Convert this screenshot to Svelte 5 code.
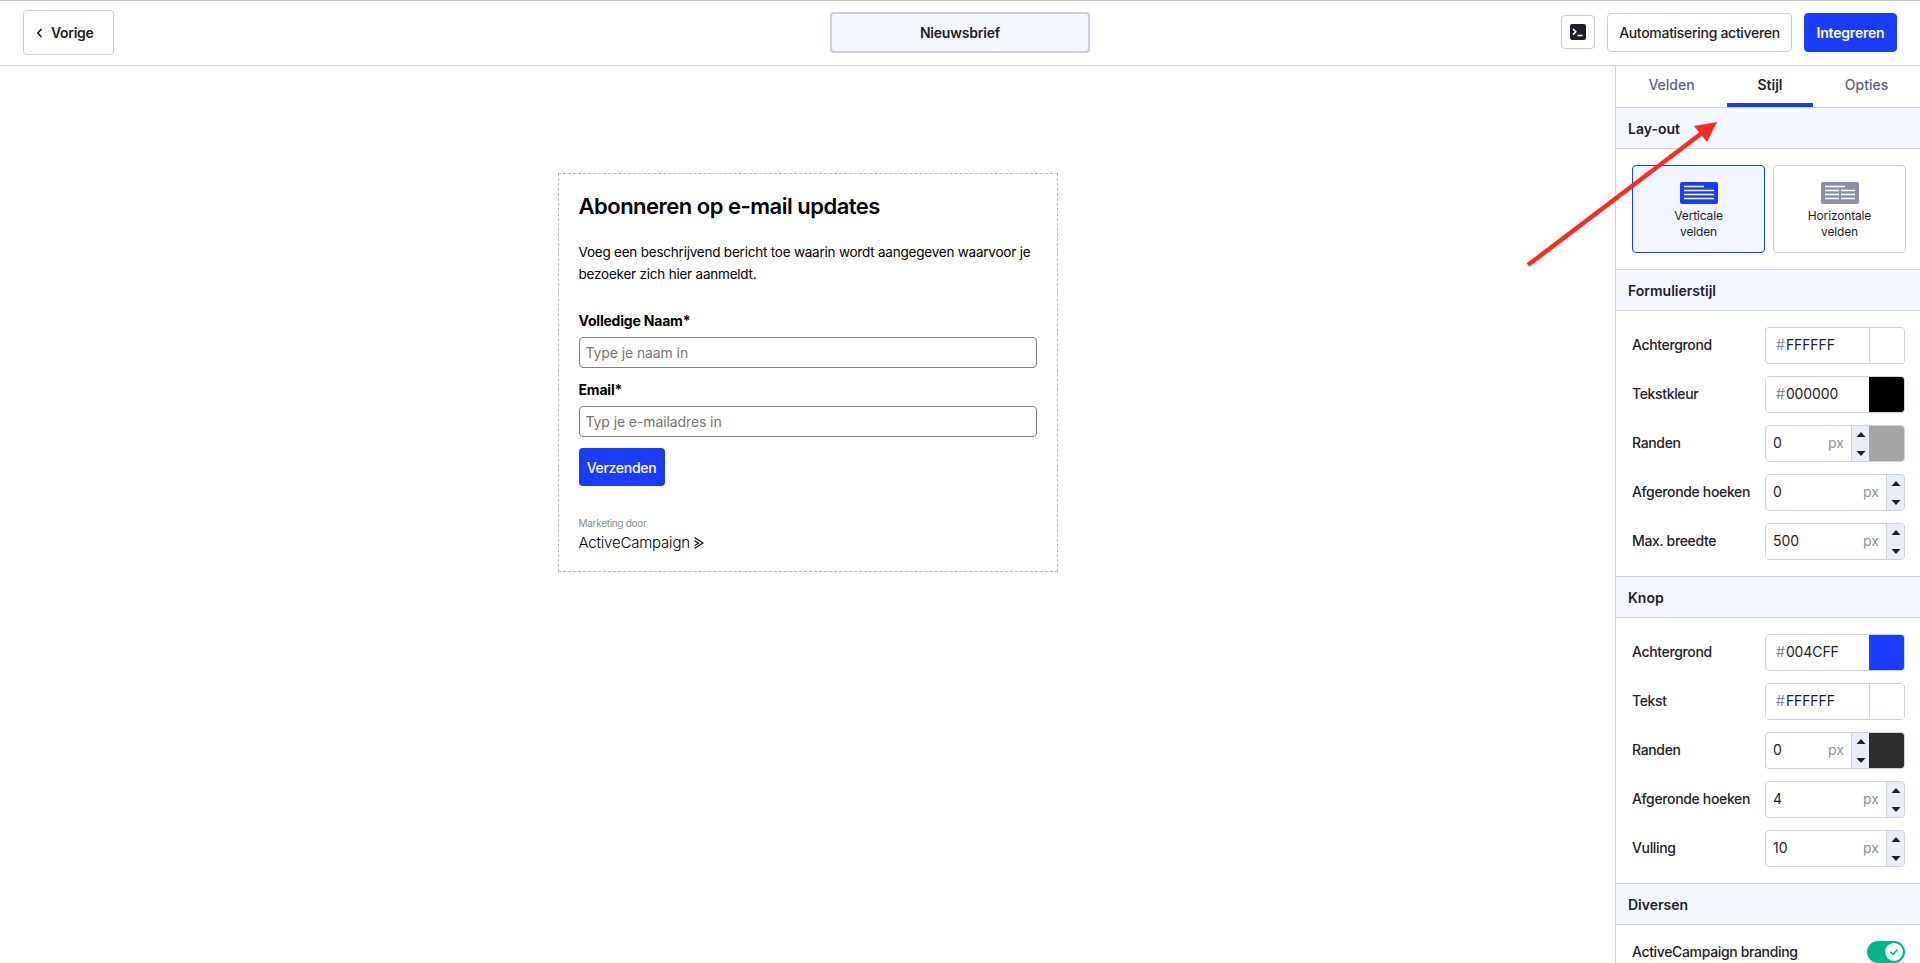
<script lang="ts">
  type Row = { label: string; hex?: string; num?: string; swatch?: string };

  const formRows: Row[] = [
    { label: 'Achtergrond', hex: 'FFFFFF', swatch: '#ffffff' },
    { label: 'Tekstkleur', hex: '000000', swatch: '#000000' },
    { label: 'Randen', num: '0', swatch: '#a5a5a5' },
    { label: 'Afgeronde hoeken', num: '0' },
    { label: 'Max. breedte', num: '500' }
  ];

  const buttonRows: Row[] = [
    { label: 'Achtergrond', hex: '004CFF', swatch: '#1a3cff' },
    { label: 'Tekst', hex: 'FFFFFF', swatch: '#ffffff' },
    { label: 'Randen', num: '0', swatch: '#2d2d2d' },
    { label: 'Afgeronde hoeken', num: '4' },
    { label: 'Vulling', num: '10' }
  ];
</script>

{#snippet spinner()}
  <span class="spin">
    <svg width="10" height="28" viewBox="0 0 10 28"><path d="M0.5 7 5 2l4.500 5z M0.500 21 5 26l4.500-5z" fill="#1f2129" /></svg>
  </span>
{/snippet}

{#snippet fieldRows(rows: Row[])}
  <div class="rows">
    {#each rows as row}
      <div class="row">
        <span class="row-label">{row.label}</span>
        <div class="field">
          {#if row.hex}
            <span class="hash">#</span><span class="hex">{row.hex}</span>
          {:else}
            <span class="num">{row.num}</span>
            <span class="px">px</span>
            {@render spinner()}
          {/if}
          {#if row.swatch}
            <span class="swatch" class:light={row.swatch === '#ffffff'} style="background: {row.swatch}"></span>
          {/if}
        </div>
      </div>
    {/each}
  </div>
{/snippet}

<div class="page">
  <header class="topbar">
    <div class="side left">
      <button class="btn back">
        <svg width="7" height="10" viewBox="0 0 7 10"><path d="M5.500 1 1.800 5l3.700 4" fill="none" stroke="#1f2129" stroke-width="1.700" /></svg>
        <span>Vorige</span>
      </button>
    </div>
    <div class="title-box">Nieuwsbrief</div>
    <div class="side right">
      <button class="btn term" aria-label="Code">
        <svg width="16" height="16" viewBox="0 0 16 16">
          <rect width="16" height="16" rx="2" fill="#1f2129" />
          <path d="M3 5 5.800 7.800 3 10.600" fill="none" stroke="#fff" stroke-width="1.600" />
          <path d="M7.500 11.500h5" stroke="#fff" stroke-width="1.500" />
        </svg>
      </button>
      <button class="btn auto">Automatisering activeren</button>
      <button class="btn primary">Integreren</button>
    </div>
  </header>

  <div class="main">
    <main class="canvas">
      <form class="signup">
        <h1>Abonneren op e-mail updates</h1>
        <p>Voeg een beschrijvend bericht toe waarin wordt aangegeven waarvoor je bezoeker zich hier aanmeldt.</p>
        <label class="form-label" for="naam">Volledige Naam*</label>
        <input id="naam" type="text" placeholder="Type je naam in" />
        <label class="form-label second" for="mail">Email*</label>
        <input id="mail" type="text" placeholder="Typ je e-mailadres in" />
        <button class="send" type="button">Verzenden</button>
        <div class="powered">Marketing door</div>
        <div class="brand">
          <span>ActiveCampaign</span>
          <svg width="11" height="14" viewBox="0 0 11 14"><path d="M1.500 1.500 9.800 7 1.500 12.500M1.500 4.500 5.500 7.200 1.500 9.800" fill="none" stroke="#111" stroke-width="1.300" /></svg>
        </div>
      </form>
    </main>

    <aside class="panel">
      <nav class="tabs">
        <span class="tab">Velden</span>
        <span class="tab active">Stijl</span>
        <span class="tab">Opties</span>
      </nav>

      <h2 class="section">Lay-out</h2>
      <div class="cards">
        <div class="card selected">
          <svg width="38" height="22" viewBox="0 0 38 22">
            <rect width="38" height="22" rx="2" fill="#1a3cff" />
            <path d="M4 4.500h20M4 8.500h30M4 12.500h30M4 16.500h30" stroke="#fff" stroke-width="1.500" />
          </svg>
          <span>Verticale<br />velden</span>
        </div>
        <div class="card">
          <svg width="38" height="22" viewBox="0 0 38 22">
            <rect width="38" height="22" rx="2" fill="#8a90a6" />
            <path d="M4 4.500h20M4 8.500h14M20 8.500h14M4 12.500h14M20 12.500h14M4 16.500h14M20 16.500h14" stroke="#fff" stroke-width="1.500" />
          </svg>
          <span>Horizontale<br />velden</span>
        </div>
      </div>

      <h2 class="section">Formulierstijl</h2>
      {@render fieldRows(formRows)}

      <h2 class="section">Knop</h2>
      {@render fieldRows(buttonRows)}

      <h2 class="section">Diversen</h2>
      <div class="branding">
        <span class="row-label">ActiveCampaign branding</span>
        <span class="toggle">
          <span class="knob">
            <svg width="10" height="8" viewBox="0 0 10 8"><path d="M1.500 4 4 6.300 8.500 1.500" fill="none" stroke="#00b78a" stroke-width="1.700" /></svg>
          </span>
        </span>
      </div>
    </aside>
  </div>

  <!-- annotation drawn over the screenshot -->
  <svg class="arrow" width="1920" height="963" viewBox="0 0 1920 963">
    <path d="M1528 265 1702 133" stroke="#ff2a22" stroke-width="4.500" fill="none" />
    <path d="M1717 122 1694 126 1707 142z" fill="#ff2a22" />
  </svg>
</div>

<style>
  :global(body) {
    margin: 0;
    background: #fff;
    overflow: hidden;
  }

  .page {
    position: relative;
    height: 963px;
    overflow: hidden;
    font-family: Inter, "Noto Sans", sans-serif;
    color: #1f2129;
    border-top: 1px solid #c9c9c9;
    box-sizing: border-box;
  }

  .topbar {
    height: 65px;
    box-sizing: border-box;
    display: flex;
    align-items: center;
    justify-content: space-between;
    padding: 0 23px;
    border-bottom: 1px solid #ccd0dc;
    position: relative;
  }

  .side {
    display: flex;
    align-items: center;
    width: 400px;
  }

  .side.right {
    justify-content: flex-end;
    gap: 12px;
    margin-top: -2px;
  }

  .btn {
    font: inherit;
    font-size: 14px;
    font-weight: 500;
    color: #1f2129;
    background: #fff;
    border: 1px solid #c9cfe0;
    border-radius: 4px;
    box-sizing: border-box;
    padding: 0;
    display: flex;
    align-items: center;
    justify-content: center;
  }

  .back {
    width: 91px;
    height: 45px;
    margin-top: -1px;
    justify-content: flex-start;
    padding-left: 12px;
    gap: 8px;
    font-weight: 600;
    letter-spacing: -0.3px;
  }

  .title-box {
    width: 260px;
    height: 41px;
    box-sizing: border-box;
    margin-top: -2px;
    border: 2px solid #c9cfe0;
    border-radius: 4px;
    background: #f5f8ff;
    font-size: 14px;
    font-weight: 600;
    letter-spacing: -0.2px;
    display: flex;
    align-items: center;
    justify-content: center;
  }

  .term {
    width: 34px;
    height: 34px;
  }

  .auto {
    width: 185px;
    height: 39px;
    letter-spacing: -0.3px;
  }

  .primary {
    width: 93px;
    height: 39px;
    background: #1a3cff;
    border-color: #1a3cff;
    color: #fff;
    font-weight: 600;
    letter-spacing: -0.2px;
  }

  .main {
    display: flex;
    height: 897px;
  }

  .canvas {
    flex: 1;
    display: flex;
    justify-content: center;
    align-items: flex-start;
    padding-top: 107px;
  }

  .signup {
    width: 500px;
    box-sizing: border-box;
    border: 1px dashed #b9b9b9;
    padding: 20px 20px 18px;
    color: #000;
    display: flex;
    flex-direction: column;
    align-items: flex-start;
  }

  h1 {
    margin: 0;
    font-size: 22px;
    line-height: 25px;
    font-weight: 600;
    letter-spacing: -0.5px;
  }

  p {
    margin: 22px 0 0;
    font-size: 13.500px;
    line-height: 22px;
    letter-spacing: -0.22px;
  }

  .form-label {
    margin-top: 25px;
    font-size: 14px;
    line-height: 22px;
    font-weight: 700;
    letter-spacing: -0.2px;
  }

  .form-label.second {
    margin-top: 11px;
  }

  input {
    width: 458px;
    height: 31px;
    box-sizing: border-box;
    margin-top: 5px;
    border: 1px solid #808080;
    border-radius: 4px;
    padding: 0 6px;
    font: inherit;
    font-size: 14px;
    letter-spacing: -0.1px;
    outline: none;
  }

  input::placeholder {
    color: #757575;
  }

  .send {
    margin-top: 11px;
    width: 86px;
    height: 38px;
    border: 0;
    border-radius: 4px;
    background: #1a3cff;
    color: #fff;
    font: inherit;
    font-size: 14px;
    font-weight: 500;
    letter-spacing: -0.3px;
    padding: 0;
  }

  .powered {
    margin-top: 30px;
    font-size: 10px;
    line-height: 14px;
    color: #8c8c8c;
    letter-spacing: -0.3px;
  }

  .brand {
    margin-top: 3px;
    display: flex;
    align-items: center;
    gap: 3px;
    font-size: 15px;
    font-weight: 300;
    line-height: 20px;
    letter-spacing: -0.2px;
    color: #000;
  }

  .panel {
    width: 305px;
    box-sizing: border-box;
    border-left: 1px solid #ccd0dc;
    overflow: hidden;
    flex: none;
  }

  .tabs {
    display: grid;
    grid-template-columns: 111px 86px 1fr;
    height: 41px;
  }

  .tab {
    display: flex;
    align-items: center;
    justify-content: center;
    font-size: 14px;
    font-weight: 500;
    color: #5c6480;
    box-sizing: border-box;
    padding-bottom: 4px;
  }

  .tab.active {
    color: #1f2129;
    font-weight: 600;
    border-bottom: 4px solid #1a3cff;
    padding-bottom: 0;
  }

  .section {
    margin: 0;
    height: 42px;
    box-sizing: border-box;
    display: flex;
    align-items: center;
    padding-left: 12px;
    font-size: 14px;
    font-weight: 600;
    background: #f5f8ff;
    border-top: 1px solid #ccd4e4;
    border-bottom: 1px solid #ccd4e4;
  }

  .cards {
    display: flex;
    gap: 8px;
    padding: 16px 0 16px 16px;
  }

  .card {
    width: 133px;
    height: 88px;
    box-sizing: border-box;
    border: 1px solid #ccd0dc;
    border-radius: 4px;
    display: flex;
    flex-direction: column;
    align-items: center;
    padding-top: 16px;
    gap: 4px;
    font-size: 12px;
    line-height: 16px;
    letter-spacing: -0.15px;
    text-align: center;
  }

  .card.selected {
    background: #f2f6ff;
    border-color: #1a3cff;
  }

  .rows {
    display: flex;
    flex-direction: column;
    gap: 12px;
    padding: 16px 15px 16px 16px;
  }

  .row {
    display: flex;
    align-items: center;
    justify-content: space-between;
    height: 37px;
  }

  .row-label {
    margin-bottom: 2px;
    font-size: 14px;
    font-weight: 500;
    letter-spacing: -0.35px;
    color: #1f2129;
  }

  .field {
    width: 140px;
    height: 37px;
    box-sizing: border-box;
    border: 1px solid #ccd4e4;
    border-radius: 4px;
    display: flex;
    align-items: center;
    font-size: 14px;
    overflow: hidden;
  }

  .hash {
    margin: 0 1px 2px 10px;
    color: #7d86a0;
  }

  .hex {
    flex: 1;
    margin-bottom: 2px;
    letter-spacing: -0.1px;
  }

  .num {
    flex: 1;
    margin-bottom: 2px;
    padding-left: 7px;
  }

  .px {
    color: #8a92aa;
    margin: 0 7px 2px 0;
  }

  .spin {
    width: 18px;
    height: 100%;
    flex: none;
    box-sizing: border-box;
    background: #e9edf6;
    border-left: 1px solid #ccd4e4;
    display: flex;
    align-items: center;
    justify-content: center;
  }

  .swatch {
    width: 35px;
    height: 100%;
    flex: none;
    box-sizing: border-box;
  }

  .swatch.light {
    border-left: 1px solid #ccd4e4;
  }

  .branding {
    display: flex;
    align-items: center;
    justify-content: space-between;
    padding: 16px 15px 0 16px;
  }

  .toggle {
    width: 38px;
    height: 22px;
    border-radius: 11px;
    background: #00b78a;
    display: flex;
    align-items: center;
    justify-content: flex-end;
    padding-right: 2px;
    box-sizing: border-box;
  }

  .knob {
    width: 18px;
    height: 18px;
    border-radius: 50%;
    background: #fff;
    display: flex;
    align-items: center;
    justify-content: center;
  }

  .arrow {
    position: absolute;
    top: -1px;
    left: 0;
    pointer-events: none;
  }
</style>
